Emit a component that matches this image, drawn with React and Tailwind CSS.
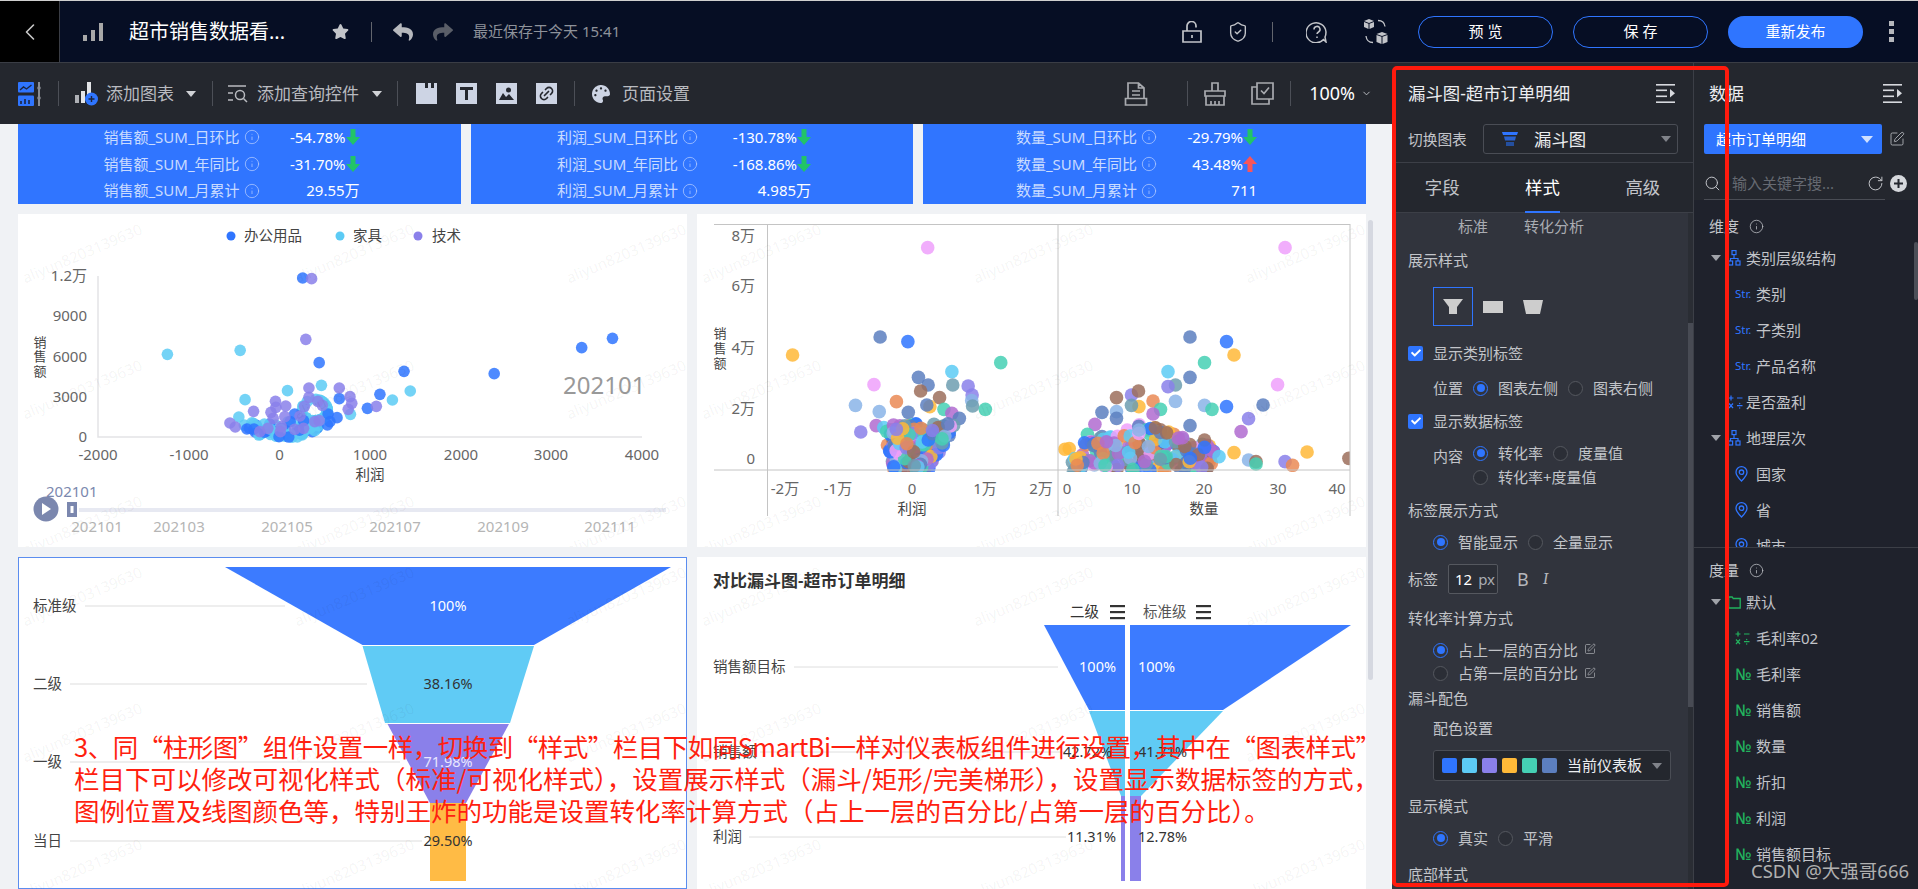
import { ChevronLeft, ChevronDown, ShieldCheck, Search, RotateCw, Info, SquarePen, Link2 } from 'lucide-react'
import { FaReply, FaShare, FaStar, FaPalette, FaCheck } from 'react-icons/fa'

const BLUE = '#2f75ff'
const SKY = '#5ccbf5'
const VIOLET = '#8a80ea'
const AMBER = '#ffb938'
const TEAL = '#45d0b4'
const SLATE = '#5c7fbf'
const BROWN = '#9c6f5c'
const ORANGE = '#ea8a55'
const PLUM = '#b06bd0'
const PINK = '#eea0fb'
const LBLUE = '#8ab4e8'
const STEEL = '#6d9db0'
const MIX = [BLUE, SKY, VIOLET, AMBER, TEAL, SLATE, BROWN, ORANGE, PLUM, PINK, LBLUE, STEEL]

// small seeded generator so the dense clusters stay the same on every render
function rng(seed) {
  let s = seed
  return () => {
    s = (s * 1664525 + 1013904223) % 4294967296
    return s / 4294967296
  }
}

const leftPts = (() => {
  const r = rng(7)
  const list = []
  for (let i = 0; i < 60; i++) {
    const t = r()
    const lo = 625 - 30 - t * 85
    const hi = 625 + 35 + t * 105
    list.push([lo + r() * (hi - lo), 684 - t * 50, i % 3 ? SKY : BLUE])
  }
  for (let i = 0; i < 26; i++) {
    const a = r() * 6.28
    list.push([705 + Math.cos(a) * 28, 600 + Math.sin(a) * 32, SKY])
  }
  const blue = [[678, 204], [715, 458], [905, 484], [1107, 491], [1303, 413], [1372, 385], [851, 553], [823, 595], [760, 566], [660, 612], [755, 623], [739, 635], [735, 612], [553, 657], [569, 657], [625, 680], [650, 635], [680, 632]]
  const sky = [[375, 433], [538, 421], [720, 526], [644, 542], [549, 569], [919, 543], [879, 570], [785, 613], [535, 621], [592, 642]]
  const violet = [[698, 206], [685, 388], [692, 534], [760, 534], [784, 560], [692, 562], [617, 574], [568, 604], [640, 588], [712, 574], [722, 586], [788, 580], [780, 598], [843, 589], [682, 589], [607, 607], [618, 592], [612, 625], [638, 620], [672, 618], [515, 639], [527, 651], [600, 655], [582, 665], [630, 650], [628, 665], [660, 658], [680, 655], [705, 635], [715, 632]]
  blue.forEach(p => list.push([...p, BLUE]))
  sky.forEach(p => list.push([...p, SKY]))
  violet.forEach(p => list.push([...p, VIOLET]))
  return list.map(([x, y, c]) => [x / 2.24, 210 + y / 3, c])
})()

const rightPts = (() => {
  const r = rng(21)
  const list = [
    [540, 113, PINK], [432, 381, SLATE], [495, 395, BLUE], [233, 435, AMBER], [706, 458, TEAL], [595, 485, SKY], [519, 502, SLATE], [541, 525, SLATE], [597, 525, STEEL], [632, 528, VIOLET], [418, 524, PINK], [524, 543, BROWN], [641, 555, VIOLET], [567, 563, BROWN], [469, 575, ORANGE], [376, 586, LBLUE], [640, 572, LBLUE], [642, 588, STEEL], [545, 590, AMBER], [538, 585, SLATE], [671, 598, TEAL], [577, 598, TEAL], [430, 605, LBLUE], [496, 607, SLATE], [595, 610, PLUM], [612, 625, SLATE], [423, 647, PLUM], [388, 666, VIOLET],
    [1352, 113, PINK], [1136, 381, SLATE], [1219, 395, BLUE], [1236, 435, AMBER], [1169, 458, TEAL], [1086, 485, SKY], [1136, 502, SLATE], [1103, 525, STEEL], [1086, 530, VIOLET], [1335, 524, PINK], [1003, 555, VIOLET], [1019, 543, BROWN], [969, 563, BROWN], [1052, 573, ORANGE], [1103, 574, LBLUE], [1302, 585, SLATE], [1169, 586, LBLUE], [1186, 598, TEAL], [1219, 590, BLUE], [1020, 590, AMBER], [1003, 586, STEEL], [1069, 598, TEAL], [1052, 612, PLUM], [969, 605, LBLUE], [936, 607, SLATE], [969, 625, SLATE], [1269, 626, VIOLET], [1252, 665, PLUM], [1136, 647, SLATE], [920, 643, PLUM], [936, 680, SLATE], [903, 673, TEAL], [1402, 726, AMBER], [1497, 745, BROWN], [1352, 755, VIOLET], [1369, 766, ORANGE], [1269, 750, LBLUE], [1286, 755, BROWN], [1286, 762, TEAL],
  ]
  // left panel cluster, a wedge that opens upward
  for (let i = 0; i < 240; i++) {
    const t = r()
    const y = 785 - t * 145
    const lo = 465 - t * 30
    const hi = 540 + t * 65
    list.push([lo + r() * (hi - lo), y, MIX[Math.floor(r() * 12)]])
  }
  // right panel cluster
  for (let i = 0; i < 180; i++) {
    const x = 850 + r() * 340
    const top = 640 + Math.abs(x - 1030) * 0.42
    list.push([x, top + r() * (785 - top), MIX[Math.floor(r() * 12)]])
  }
  list.push([1169, 690, BROWN], [1119, 683, PLUM], [1169, 712, BLUE], [1202, 740, SKY], [1236, 728, AMBER], [1020, 670, PINK], [1020, 660, LBLUE])
  return list.map(([x, y, c]) => [690 + x / 2.272, 210 + y / 3, c])
})()

function Watermark() {
  const cells = Array.from({ length: 9 })
  return (
    <div className="absolute inset-0 overflow-hidden pointer-events-none">
      <div className="absolute left-[-72px] top-[-29px] grid grid-cols-[272px_272px_272px] auto-rows-[136px]">
        {cells.map((_, i) => (
          <div key={i} className="flex items-center justify-center">
            <span className="-rotate-[23deg] text-[15px] text-black/[.055] whitespace-nowrap">aliyun8203139630</span>
          </div>
        ))}
      </div>
    </div>
  )
}

function Divider({ className }) {
  return <div className={`w-px h-[25px] bg-[#4c4f57] shrink-0 ${className}`} />
}

function Caret({ className }) {
  return <div className={`w-0 h-0 border-x-[5px] border-x-transparent border-t-[6px] shrink-0 ${className}`} />
}

function CollapseIcon() {
  return (
    <svg width="19" height="19" viewBox="0 0 19 19" fill="#d7d9de">
      <rect x="0" y="0" width="19" height="1.6" />
      <rect x="0" y="5.5" width="11" height="1.6" />
      <rect x="0" y="11.5" width="11" height="1.6" />
      <rect x="0" y="17.4" width="19" height="1.6" />
      <path d="M14 5l5 4.2-5 4.2z" />
    </svg>
  )
}

function KpiRow({ label, value, valueW, arrow, clip }) {
  return (
    <div className="flex items-center h-[27.5px]">
      {/* the last row's underscores are cut off by its line box in the picture */}
      <span className={`text-[15px] text-[#c9dbff] whitespace-nowrap ${clip ? 'h-[15px] leading-[15px] overflow-hidden' : ''}`}>{label}</span>
      <Info size={16} strokeWidth={1.1} className="ml-[4px] text-[#b5ccff] shrink-0" />
      <div className={`flex items-center justify-end text-[15px] text-white ${valueW}`}>
        <span>{value}</span>
        {arrow === 'down' && (
          <svg width="14" height="16" viewBox="0 0 14 16" fill="#22c468"><path d="M4.500 0h5v8H14l-7 8-7-8h4.500z" /></svg>
        )}
        {arrow === 'up' && (
          <svg width="14" height="16" viewBox="0 0 14 16" fill="#f8555a"><path d="M4.500 16h5V8H14L7 0 0 8h4.500z" /></svg>
        )}
      </div>
    </div>
  )
}

function KpiCard({ name, width, valueW, rows }) {
  return (
    <div className={`relative bg-[#3075ff] overflow-hidden flex flex-col items-center pr-4 ${width}`}>
      <KpiRow label={`${name}_SUM_日环比`} value={rows[0][0]} arrow={rows[0][1]} valueW={valueW} />
      <KpiRow label={`${name}_SUM_年同比`} value={rows[1][0]} arrow={rows[1][1]} valueW={valueW} />
      <KpiRow label={`${name}_SUM_月累计`} value={rows[2][0]} valueW={valueW} clip />
    </div>
  )
}

function ScatterLeft() {
  const ticks = [['-2000', 98], ['-1000', 189], ['0', 279.5], ['1000', 370], ['2000', 461], ['3000', 551], ['4000', 642]]
  const ys = [['1.2万', 276], ['9000', 316], ['6000', 356.5], ['3000', 397], ['0', 437]]
  const months = [['202101', 97], ['202103', 179], ['202105', 287], ['202107', 395], ['202109', 503], ['202111', 610]]
  return (
    <svg viewBox="18 214 669 333" className="block w-full h-full" fontSize="15" fill="#666">
      <circle cx="231" cy="236" r="4.5" fill={BLUE} />
      <text x="244" y="241" fontSize="14.5" fill="#444">办公用品</text>
      <circle cx="340" cy="236" r="4.5" fill={SKY} />
      <text x="353" y="241" fontSize="14.5" fill="#444">家具</text>
      <circle cx="418" cy="236" r="4.5" fill={VIOLET} />
      <text x="432" y="241" fontSize="14.5" fill="#444">技术</text>
      <path d="M98 276V437H642" fill="none" stroke="#e3e3e6" strokeWidth="1.5" />
      {ys.map(([t, y]) => <text key={t} x="87" y={y + 5} textAnchor="end">{t}</text>)}
      {ticks.map(([t, x]) => <text key={t} x={x} y="460" textAnchor="middle">{t}</text>)}
      <text x="370" y="480" textAnchor="middle" fontSize="14.5" fill="#444">利润</text>
      <text x="40" y="347" textAnchor="middle" fontSize="13" fill="#444">销</text>
      <text x="40" y="361" textAnchor="middle" fontSize="13" fill="#444">售</text>
      <text x="40" y="376" textAnchor="middle" fontSize="13" fill="#444">额</text>
      {leftPts.map(([x, y, c], i) => <circle key={i} cx={x} cy={y} r="5.8" fill={c} fillOpacity="0.85" />)}
      <text x="563" y="394" fontSize="24" fill="#999">202101</text>
      <text x="46" y="497" fontSize="15" fill="#7b88ae">202101</text>
      <circle cx="46" cy="509" r="12.5" fill="#7b87ae" />
      <path d="M42 503l9 6-9 6z" fill="#fff" />
      <rect x="79" y="508" width="587" height="4" fill="#e7e9f2" />
      <rect x="67" y="502" width="10" height="15" fill="#7b87ae" />
      <rect x="70.5" y="506" width="3" height="7" fill="#fff" />
      {months.map(([t, x]) => <text key={t} x={x} y="532" textAnchor="middle" fill="#b5b5b5">{t}</text>)}
    </svg>
  )
}

function ScatterRight() {
  const ys = [['8万', 236], ['6万', 286], ['4万', 348], ['2万', 409], ['0', 459]]
  const xs = [['-2万', 785], ['-1万', 838], ['0', 912], ['1万', 985], ['2万', 1041], ['0', 1067], ['10', 1132], ['20', 1204], ['30', 1278], ['40', 1337]]
  return (
    <svg viewBox="697 214 669 333" className="block w-full h-full" fontSize="15" fill="#666">
      <defs>
        <clipPath id="plot"><rect x="697" y="224" width="653" height="248" /></clipPath>
      </defs>
      <g clipPath="url(#plot)">
        {rightPts.map(([x, y, c], i) => <circle key={i} cx={x} cy={y} r="6.8" fill={c} fillOpacity="0.85" />)}
      </g>
      <path d="M714 224.500H1350M714 470H1350M767.500 224V516M1058 224V516M1350 224V516" fill="none" stroke="#c4c4c4" strokeWidth="1" />
      {ys.map(([t, y]) => <text key={t} x="755" y={y + 5} textAnchor="end">{t}</text>)}
      {xs.map(([t, x], i) => <text key={i} x={x} y="494" textAnchor="middle">{t}</text>)}
      <text x="912" y="514" textAnchor="middle" fontSize="14.5" fill="#444">利润</text>
      <text x="1204" y="514" textAnchor="middle" fontSize="14.5" fill="#444">数量</text>
      <text x="720" y="338" textAnchor="middle" fontSize="13" fill="#444">销</text>
      <text x="720" y="353" textAnchor="middle" fontSize="13" fill="#444">售</text>
      <text x="720" y="368" textAnchor="middle" fontSize="13" fill="#444">额</text>
    </svg>
  )
}

function FunnelLeft() {
  const labels = [['标准级', 606, 85, 285], ['二级', 684, 70, 367], ['一级', 762, 70, 400], ['当日', 841, 70, 422]]
  return (
    <svg viewBox="18 557 669 332" className="block w-full h-full" fontSize="14.5" fill="#444">
      <polygon points="225,567 671,567 534,645 362.500,645" fill="#3c7bff" />
      <polygon points="362.500,646 534,646 510,723 385,723" fill="#60cbf5" />
      <polygon points="387.500,724 509,724 466,803 430,803" fill={VIOLET} />
      <rect x="430" y="803" width="36" height="78" fill="#ffbb45" />
      {labels.map(([t, y, x1, x2]) => (
        <g key={t}>
          <text x="33" y={y + 5}>{t}</text>
          <line x1={x1} x2={x2} y1={y} y2={y} stroke="#dedede" strokeWidth="1.2" />
        </g>
      ))}
      <text x="448" y="611" textAnchor="middle" fill="#fff">100%</text>
      <text x="448" y="689" textAnchor="middle" fill="#333">38.16%</text>
      <text x="448" y="767" textAnchor="middle" fill="#e8e6ff">71.98%</text>
      <text x="448" y="846" textAnchor="middle" fill="#333">29.50%</text>
    </svg>
  )
}

function FunnelRight() {
  const menu = x => (
    <g fill="#333">
      <rect x={x} y="605" width="15" height="2.2" />
      <rect x={x} y="611" width="15" height="2.2" />
      <rect x={x} y="617" width="15" height="2.2" />
    </g>
  )
  return (
    <svg viewBox="697 557 669 332" className="block w-full h-full" fontSize="14.5" fill="#444">
      <text x="713" y="587" fontSize="17" fontWeight="600" fill="#333">对比漏斗图-超市订单明细</text>
      <text x="1070" y="617" fill="#333">二级</text>
      {menu(1110)}
      <text x="1143" y="617" fill="#555">标准级</text>
      {menu(1196)}
      <polygon points="1044,625 1125,625 1125,710 1089,710" fill="#3c7bff" />
      <polygon points="1130,625 1351,625 1223,710 1130,710" fill="#3c7bff" />
      <polygon points="1089,711 1125,711 1125,796 1121,796" fill="#60cbf5" />
      <polygon points="1130,711 1223,711 1141,796 1130,796" fill="#60cbf5" />
      <rect x="1121" y="796" width="4" height="85" fill={VIOLET} />
      <rect x="1130" y="796" width="11" height="85" fill={VIOLET} />
      <text x="713" y="672">销售额目标</text>
      <line x1="794" x2="1058" y1="667" y2="667" stroke="#dedede" strokeWidth="1" />
      <text x="713" y="757">销售额</text>
      <line x1="760" x2="1064" y1="752" y2="752" stroke="#dedede" strokeWidth="1" />
      <text x="713" y="842">利润</text>
      <line x1="749" x2="1066" y1="837" y2="837" stroke="#dedede" strokeWidth="1" />
      <text x="1116" y="672" textAnchor="end" fill="#fff">100%</text>
      <text x="1138" y="672" fill="#fff">100%</text>
      <text x="1112" y="757" textAnchor="end" fill="#333">42.72%</text>
      <text x="1138" y="757" fill="#333">41.71%</text>
      <text x="1116" y="842" textAnchor="end" fill="#333">11.31%</text>
      <text x="1138" y="842" fill="#333">12.78%</text>
    </svg>
  )
}

function Check({ children }) {
  return (
    <div className="flex items-center">
      <div className="w-[15px] h-[15px] rounded-[2px] bg-[#2f75ff] flex items-center justify-center">
        <FaCheck size={10} color="#fff" />
      </div>
      <span className="ml-[10px]">{children}</span>
    </div>
  )
}

function Radio({ on, children, className = '' }) {
  return (
    <div className={`flex items-center ${className}`}>
      {on ? (
        <div className="w-[15px] h-[15px] rounded-full border border-[#2f75ff] flex items-center justify-center">
          <div className="w-[8px] h-[8px] rounded-full bg-[#2f75ff]" />
        </div>
      ) : (
        <div className="w-[15px] h-[15px] rounded-full border border-[#55585f] bg-[#2b2e36]" />
      )}
      <span className="ml-[10px]">{children}</span>
    </div>
  )
}

function ConfigPanel() {
  return (
    <div className="w-[302px] shrink-0 flex flex-col bg-[#24272e] border-r border-[#3c3f47] text-[15px] text-[#c2c4c9]">
      <div className="h-[61px] flex items-center justify-between pl-[16px] pr-[18px]">
        <span className="text-[17.4px] text-[#eceef1]">漏斗图-超市订单明细</span>
        <CollapseIcon />
      </div>
      <div className="h-[39px] flex items-start pl-[16px] border-b border-[#3c3f47]">
        <span className="leading-[30px] w-[59px] text-[14.7px] whitespace-nowrap">切换图表</span>
        <div className="ml-[16px] w-[195px] h-[30px] border border-[#4a4d55] rounded-[3px] flex items-center pl-[18px] pr-[6px]">
          <svg width="16" height="14" viewBox="0 0 16 14">
            <path d="M0 0h16l-1 3H1z" fill="#2f75ff" />
            <path d="M2 4.500h12l-1 4H3z" fill="#2a62d0" />
            <path d="M4 10h8v4H4z" fill="#244f9f" />
          </svg>
          <span className="ml-[16px] text-[17.4px] text-[#eceef1] flex-1">漏斗图</span>
          <Caret className="border-t-[#80838a]" />
        </div>
      </div>
      <div className="h-[50px] flex border-b border-[#3c3f47] text-[17.4px]">
        <div className="flex-1 flex items-center justify-center">字段</div>
        <div className="flex-1 flex items-center justify-center relative text-white">
          样式
          <div className="absolute bottom-[-1px] left-[33px] w-[35px] h-[2px] bg-[#2f75ff]" />
        </div>
        <div className="flex-1 flex items-center justify-center">高级</div>
      </div>
      <div className="relative flex-1 bg-[#31343d] overflow-hidden pl-[16px]">
        <div className="absolute right-0 top-0 bottom-0 w-[5px] bg-[#2a2d34]">
          <div className="mt-[110px] h-[384px] bg-[#484b54]" />
        </div>
        <div className="h-[26px] flex items-center pl-[50px] text-[#a9acb2]">
          <span>标准</span>
          <span className="ml-[36px]">转化分析</span>
        </div>
        <div className="h-[42px] flex items-center">展示样式</div>
        <div className="mt-[6px] h-[39px] flex items-center pl-[25px]">
          <div className="w-[40px] h-[39px] border border-[#2f75ff] flex items-center justify-center">
            <svg width="20" height="15" viewBox="0 0 20 15" fill="#cdcdcd"><path d="M0 0h20l-6 8v7H6V8z" /></svg>
          </div>
          <div className="ml-[10px] w-[20px] h-[12px] bg-[#cdcdcd]" />
          <svg className="ml-[20px]" width="20" height="14" viewBox="0 0 20 14" fill="#cdcdcd"><path d="M0 0h20l-3 14H3z" /></svg>
        </div>
        <div className="mt-[14px] h-[26px] flex items-center"><Check>显示类别标签</Check></div>
        <div className="h-[44px] flex items-center pl-[25px]">
          <span className="w-[40px]">位置</span>
          <Radio on>图表左侧</Radio>
          <Radio className="ml-[10px]">图表右侧</Radio>
        </div>
        <div className="h-[22px] flex items-center"><Check>显示数据标签</Check></div>
        <div className="mt-[10px] h-[22px] flex items-center pl-[25px]">
          <span className="w-[40px] pt-[6px]">内容</span>
          <Radio on>转化率</Radio>
          <Radio className="ml-[10px]">度量值</Radio>
        </div>
        <div className="mt-[2px] h-[22px] flex items-center pl-[65px]">
          <Radio>转化率+度量值</Radio>
        </div>
        <div className="mt-[9px] h-[26px] flex items-center">标签展示方式</div>
        <div className="mt-[6px] h-[26px] flex items-center pl-[25px]">
          <Radio on>智能显示</Radio>
          <Radio className="ml-[10px]">全量显示</Radio>
        </div>
        <div className="mt-[9px] h-[30px] flex items-center">
          <span className="w-[40px]">标签</span>
          <div className="w-[50px] h-[30px] border border-[#55585f] rounded-[2px] flex items-center pl-[6px] bg-[#2b2e36]">
            <span className="text-white">12</span>
            <span className="ml-[6px] text-[#a9acb2]">px</span>
          </div>
          <span className="ml-[19px] text-[18px] text-[#b5b7bc]">B</span>
          <span className="ml-[14px] text-[17px] italic font-serif text-[#b5b7bc]">I</span>
        </div>
        <div className="mt-[11px] h-[26px] flex items-center">转化率计算方式</div>
        <div className="mt-[8px] h-[22px] flex items-center pl-[25px]">
          <Radio on>占上一层的百分比</Radio>
          <SquarePen size={12} strokeWidth={1.2} className="ml-[6px] -mt-[3px]" />
        </div>
        <div className="mt-[1px] h-[22px] flex items-center pl-[25px]">
          <Radio>占第一层的百分比</Radio>
          <SquarePen size={12} strokeWidth={1.2} className="ml-[6px] -mt-[1px]" />
        </div>
        <div className="mt-[3px] h-[22px] flex items-center">漏斗配色</div>
        <div className="mt-[8px] h-[22px] flex items-center pl-[25px]">配色设置</div>
        <div className="mt-[11px] ml-[25px] w-[238px] h-[31px] border border-[#4a4d55] rounded-[3px] bg-[#24272e] flex items-center pl-[8px] gap-[5px]">
          {['bg-[#2f75ff]', 'bg-[#5ccbf5]', 'bg-[#8a80ea]', 'bg-[#ffb938]', 'bg-[#45d0b4]', 'bg-[#5c7fbf]'].map(c => (
            <div key={c} className={`w-[15px] h-[15px] rounded-[2px] ${c}`} />
          ))}
          <span className="ml-[5px] text-[#eceef1] whitespace-nowrap">当前仪表板</span>
          <Caret className="ml-[5px] border-t-[#80838a]" />
        </div>
        <div className="mt-[14px] h-[22px] flex items-center">显示模式</div>
        <div className="mt-[10px] h-[22px] flex items-center pl-[25px]">
          <Radio on>真实</Radio>
          <Radio className="ml-[10px]">平滑</Radio>
        </div>
        <div className="mt-[14px] h-[22px] flex items-center">底部样式</div>
      </div>
    </div>
  )
}

function Hierarchy({ color = '#2f75ff' }) {
  return (
    <svg width="13" height="16" viewBox="0 0 13 16" fill="none" stroke={color} strokeWidth="1.2">
      <rect x="4" y="0.6" width="4" height="4" />
      <rect x="0.6" y="11" width="4" height="4" />
      <rect x="8" y="11" width="4" height="4" />
      <path d="M6 5v3.500M2.500 11V8.500h7.500V11" />
    </svg>
  )
}

function Calc({ color }) {
  return (
    <svg width="15" height="14" viewBox="0 0 15 14" stroke={color} strokeWidth="1.2" fill="none">
      <path d="M0.500 3h5M3 0.500v5M9 3h5.500M1 8.500l4 4.500M5 8.500l-4 4.500M9 10.700h5.500" />
      <circle cx="11.700" cy="8.500" r="0.7" fill={color} stroke="none" />
      <circle cx="11.700" cy="13" r="0.7" fill={color} stroke="none" />
    </svg>
  )
}

function Pin() {
  return (
    <svg width="13" height="16" viewBox="0 0 13 16" fill="none" stroke="#2f75ff" strokeWidth="1.3">
      <path d="M6.500 15C3 11.500 1 9 1 6.200a5.500 5.500 0 0 1 11 0C12 9 10 11.500 6.500 15z" />
      <circle cx="6.500" cy="6.200" r="2.200" />
    </svg>
  )
}

function GroupRow({ icon, caret = true, children }) {
  return (
    <div className="h-[36px] flex items-center pl-[17px]">
      <div className="w-[17px]">{caret && <Caret className="border-t-[#a0a3a9]" />}</div>
      <div className="w-[18px] flex items-center">{icon}</div>
      <span>{children}</span>
    </div>
  )
}

function LeafRow({ icon, children }) {
  return (
    <div className="h-[36px] flex items-center pl-[41px]">
      <div className="w-[21px] flex items-center">{icon}</div>
      <span>{children}</span>
    </div>
  )
}

const StrTag = <span className="text-[11.5px] text-[#2f75ff]">Str.</span>
const NumTag = <span className="text-[16px] leading-none font-medium text-[#22b35e]">№</span>

function DataPanel() {
  return (
    <div className="flex-1 flex flex-col bg-[#1f222c] text-[15px] text-[#c2c4c9]">
      <div className="bg-[#24272e]">
        <div className="h-[61px] flex items-center justify-between pl-[15px] pr-[16px]">
          <span className="text-[17.4px] text-[#eceef1]">数据</span>
          <CollapseIcon />
        </div>
        <div className="h-[30px] flex items-center pl-[10px]">
          <div className="w-[178px] h-[30px] bg-[#2f75ff] rounded-[2px] flex items-center justify-between pl-[12px] pr-[9px] text-white">
            超市订单明细
            <Caret className="border-x-[6px] border-t-[7px] border-t-[#cfe0ff]" />
          </div>
          <SquarePen size={16} strokeWidth={1.2} className="ml-[7px]" />
        </div>
        <div className="mt-[13px] h-[33px] flex items-center ml-[10px] w-[181px] border-b border-[#4a4d55] relative">
          <Search size={17} strokeWidth={1.4} />
          <span className="ml-[11px] text-[#666a72] whitespace-nowrap">输入关键字搜...</span>
          <RotateCw size={17} strokeWidth={1.4} className="absolute right-[1px] top-[8px]" />
          <svg className="absolute right-[-22px] top-[8px]" width="17" height="17" viewBox="0 0 17 17">
            <circle cx="8.500" cy="8.500" r="8.500" fill="#d6d8dc" />
            <path d="M8.500 4v9M4 8.500h9" stroke="#24272e" strokeWidth="2" />
          </svg>
        </div>
      </div>
      <div className="h-[348px] overflow-hidden relative border-b border-[#3c3f47]">
        <div className="absolute right-0 top-[42px] w-[4px] h-[58px] bg-[#4c4f58] rounded-full" />
        <div className="h-[40px] pt-[12px] flex items-center pl-[15px]">
          维度<Info size={15} strokeWidth={1.2} className="ml-[10px]" />
        </div>
        <GroupRow icon={<Hierarchy />}>类别层级结构</GroupRow>
        <LeafRow icon={StrTag}>类别</LeafRow>
        <LeafRow icon={StrTag}>子类别</LeafRow>
        <LeafRow icon={StrTag}>产品名称</LeafRow>
        <GroupRow caret={false} icon={<Calc color="#2f75ff" />}>是否盈利</GroupRow>
        <GroupRow icon={<Hierarchy />}>地理层次</GroupRow>
        <LeafRow icon={<Pin />}>国家</LeafRow>
        <LeafRow icon={<Pin />}>省</LeafRow>
        <LeafRow icon={<Pin />}>城市</LeafRow>
      </div>
      <div className="h-[36px] pt-[8px] flex items-center pl-[15px]">
        度量<Info size={15} strokeWidth={1.2} className="ml-[10px]" />
      </div>
      <GroupRow icon={
        <svg width="13" height="14" viewBox="0 0 13 14" fill="none" stroke="#22b35e" strokeWidth="1.3"><path d="M0.700 13V2h3.500l1 1.500h7V13z" /></svg>
      }>默认</GroupRow>
      <LeafRow icon={<Calc color="#22b35e" />}>毛利率02</LeafRow>
      <LeafRow icon={NumTag}>毛利率</LeafRow>
      <LeafRow icon={NumTag}>销售额</LeafRow>
      <LeafRow icon={NumTag}>数量</LeafRow>
      <LeafRow icon={NumTag}>折扣</LeafRow>
      <LeafRow icon={NumTag}>利润</LeafRow>
      <LeafRow icon={NumTag}>销售额目标</LeafRow>
    </div>
  )
}

function Toolbar() {
  return (
    <div className="h-[61px] shrink-0 flex items-center pl-[18px] pr-[20px] bg-[#24272e] text-[17px] text-[#b9bbc0] whitespace-nowrap">
      <svg width="24" height="24" viewBox="0 0 24 24" className="shrink-0">
        <rect x="0" y="0" width="16" height="10.5" rx="1" fill="#2f75ff" />
        <rect x="0" y="13.5" width="16" height="10.5" rx="1" fill="#2f75ff" />
        <path d="M2 8l3.500-3 3 2 5-4" stroke="#1b2540" strokeWidth="1.4" fill="none" />
        <path d="M3 22v-3M7 22v-5M11 22v-4" stroke="#1b2540" strokeWidth="1.6" />
        <path d="M21 0v24" stroke="#8a8d94" strokeWidth="2" />
        <circle cx="21" cy="6" r="1.8" fill="#8a8d94" /><circle cx="21" cy="16" r="1.8" fill="#8a8d94" />
      </svg>
      <Divider className="ml-[16px]" />
      <svg className="ml-[16px] shrink-0" width="23" height="24" viewBox="0 0 23 24">
        <rect x="0" y="13" width="4" height="8" fill="#aeb0b5" />
        <rect x="6" y="9" width="4" height="12" fill="#e3e4e7" />
        <rect x="12" y="0" width="4" height="15" fill="#e3e4e7" />
        <circle cx="16.5" cy="17" r="6.5" fill="#2f75ff" />
        <path d="M16.500 14v6M13.500 17h6" stroke="#1b2540" strokeWidth="1.4" />
      </svg>
      <span className="ml-[8px]">添加图表</span>
      <Caret className="ml-[12px] border-t-[#d0d2d6]" />
      <Divider className="ml-[16px]" />
      <svg className="ml-[15px] shrink-0" width="20" height="20" viewBox="0 0 20 20" fill="none" stroke="#b9bbc0" strokeWidth="1.5">
        <path d="M0 2h18M0 9h5M0 16h5" />
        <circle cx="12" cy="11" r="4.5" /><path d="M15.500 14.500L19 18" />
      </svg>
      <span className="ml-[9px]">添加查询控件</span>
      <Caret className="ml-[13px] border-t-[#d0d2d6]" />
      <Divider className="ml-[15px]" />
      <svg className="ml-[18px] shrink-0" width="21" height="21" viewBox="0 0 21 21" fill="#cdd4e4"><path d="M0 0h9v5h3V0h3v5h3V0h3v21H0z" /></svg>
      <div className="ml-[19px] w-[21px] h-[21px] bg-[#cdd4e4] flex items-center justify-center shrink-0">
        <svg width="13" height="13" viewBox="0 0 13 13" fill="#24272e"><path d="M0 0h13v3H8v10H5V3H0z" /></svg>
      </div>
      <div className="ml-[19px] w-[21px] h-[21px] bg-[#cdd4e4] flex items-center justify-center shrink-0">
        <svg width="15" height="13" viewBox="0 0 15 13" fill="#24272e"><circle cx="9.5" cy="3" r="2.5" /><path d="M0 13l4-7 3 4 3-3 5 6z" /></svg>
      </div>
      <div className="ml-[19px] w-[21px] h-[21px] bg-[#cdd4e4] flex items-center justify-center shrink-0">
        <Link2 size={17} color="#24272e" strokeWidth={2.4} className="-rotate-45" />
      </div>
      <Divider className="ml-[17px]" />
      <FaPalette size={18} color="#cdd4e4" className="ml-[17px] shrink-0" />
      <span className="ml-[12px]">页面设置</span>
      <div className="ml-auto flex items-center">
        <svg width="24" height="24" viewBox="0 0 24 24" fill="none" stroke="#a8aaaf" strokeWidth="1.7">
          <path d="M4 16.500V1h10.500L20 6v10.500M14.500 1v5H20M1.500 16.500h21V23h-21zM8 9h8M8 13h8" />
        </svg>
        <Divider className="ml-[39px]" />
        <svg className="ml-[16px]" width="22" height="24" viewBox="0 0 22 24" fill="none" stroke="#a8aaaf" strokeWidth="1.7">
          <path d="M8 9V1h6v8M1 9h20v5H1zM2 14v9h18v-9M7 23v-4M11 23v-4M15 23v-4" />
        </svg>
        <svg className="ml-[25px]" width="23" height="23" viewBox="0 0 23 23" fill="none" stroke="#a8aaaf" strokeWidth="1.7">
          <path d="M6 1h16v16H6zM6 5H1v17h17v-5M10 8.500l3 3 5-6" />
        </svg>
        <Divider className="ml-[16px]" />
        <span className="ml-[18px] text-[18px] text-white">100%</span>
        <ChevronDown size={11} className="ml-[6px] text-[#c2c4c9]" />
      </div>
    </div>
  )
}

function TopBar() {
  return (
    <div className="h-[62px] shrink-0 flex items-center border-t border-[#cfcfcf] bg-[#060e24] text-[#a8acb5]">
      <div className="w-[60px] h-full bg-black border-r border-[#3a3d45] flex items-center justify-center shrink-0">
        <ChevronLeft size={28} strokeWidth={1.4} className="text-[#c8c8c8]" />
      </div>
      <svg className="ml-[23px] shrink-0" width="21" height="18" viewBox="0 0 21 18" fill="#a8a8a8">
        <rect x="0" y="12" width="4" height="6" /><rect x="8" y="7" width="4" height="11" /><rect x="16" y="0" width="4" height="18" />
      </svg>
      <span className="ml-[25px] w-[203px] text-[20px] text-white whitespace-nowrap">超市销售数据看...</span>
      <FaStar size={17} className="text-[#c2c4c9] shrink-0" />
      <div className="ml-[22px] w-px h-[20px] bg-[#62656d]" />
      <FaReply size={20} className="ml-[21px] text-[#b6b8bd]" />
      <FaShare size={20} className="ml-[20px] text-[#5a5e68]" />
      <span className="ml-[20px] text-[15px] text-[#8e929a] whitespace-nowrap">最近保存于今天 15:41</span>
      <div className="ml-auto flex items-center pr-[24px]">
        <svg width="20" height="22" viewBox="0 0 20 22" fill="none" stroke="#c2c4c9" strokeWidth="1.7">
          <path d="M1 10h18v11H1zM5 10V5a4.500 4.500 0 0 1 9 0v1.500M10 14v3" />
        </svg>
        <ShieldCheck size={22} strokeWidth={1.5} className="ml-[25px] text-[#c2c4c9]" />
        <div className="ml-[23px] w-px h-[20px] bg-[#62656d]" />
        <svg className="ml-[33px]" width="22" height="22" viewBox="0 0 22 22" fill="none" stroke="#c2c4c9" strokeWidth="1.5">
          <path d="M20 21l-2.500-2.500A10 10 0 1 1 20 11c0 2-.3 3.500-1 5z" />
          <path d="M8 8.500a3 3 0 1 1 4.500 2.500c-1 .6-1.500 1-1.500 2M11 15.500v1.500" />
        </svg>
        <svg className="ml-[35px]" width="25" height="25" viewBox="0 0 25 25" fill="#c2c4c9">
          <path d="M6 0l5 2-5 2-5-2zM1 3l4.500 1.800V10L1 8zM11 3L6.500 4.800V10L11 8z" />
          <path d="M19 13l5.500 2-5.500 2-5.500-2zM13.500 16l5 1.800V25l-5-2zM24.500 16l-5 1.800V25l5-2z" />
          <path d="M15 1.500c4 0 6.500 2 7 6M10 23.500c-4 0-6.500-2-7-6.500" fill="none" stroke="#c2c4c9" strokeWidth="1.3" />
        </svg>
        <button className="ml-[30px] w-[135px] h-[32px] rounded-full border border-[#2f75ff] text-[15px] text-white">预 览</button>
        <button className="ml-[20px] w-[135px] h-[32px] rounded-full border border-[#2f75ff] text-[15px] text-white">保 存</button>
        <button className="ml-[20px] w-[135px] h-[32px] rounded-full bg-[#2f75ff] text-[15px] text-white">重新发布</button>
        <div className="ml-[26px] w-[5px] flex flex-col gap-[3px]">
          <div className="h-[5px] bg-[#b5b7bc]" /><div className="h-[5px] bg-[#b5b7bc]" /><div className="h-[5px] bg-[#b5b7bc]" />
        </div>
      </div>
    </div>
  )
}

export default function App() {
  return (
    <div className="relative w-[1918px] h-[889px] overflow-hidden flex flex-col font-['Noto_Sans','Noto_Sans_CJK_SC',sans-serif]">
      <TopBar />
      <div className="flex-1 flex min-h-0 border-t border-[#3a3d45]">
        <div className="w-[1392px] shrink-0 flex flex-col">
          <Toolbar />
          <div className="relative flex-1 bg-[#f0f2f5] pl-[18px] overflow-hidden">
            <div className="absolute left-[1368px] top-[96px] w-[5px] h-[460px] bg-[#d5d8e0] rounded-full" />
            <div className="flex gap-[10px] h-[80px]">
              <KpiCard name="销售额" width="w-[443px]" valueW="w-[100px]" rows={[['-54.78%', 'down'], ['-31.70%', 'down'], ['29.55万']]} />
              <KpiCard name="利润" width="w-[442px]" valueW="w-[113px]" rows={[['-130.78%', 'down'], ['-168.86%', 'down'], ['4.985万']]} />
              <KpiCard name="数量" width="w-[443px]" valueW="w-[100px]" rows={[['-29.79%', 'down'], ['43.48%', 'up'], ['711']]} />
            </div>
            <div className="mt-[10px] flex gap-[10px] h-[333px]">
              <div className="relative w-[669px] bg-white"><ScatterLeft /><Watermark /></div>
              <div className="relative w-[669px] bg-white"><ScatterRight /><Watermark /></div>
            </div>
            <div className="mt-[10px] flex gap-[10px] h-[332px]">
              <div className="relative w-[669px] bg-white ring-1 ring-inset ring-[#5b8def]"><FunnelLeft /><Watermark /></div>
              <div className="relative w-[669px] bg-white"><FunnelRight /><Watermark /></div>
            </div>
          </div>
        </div>
        <ConfigPanel />
        <DataPanel />
      </div>

      {/* annotation drawn on top of the screenshot */}
      <div className="absolute left-[74px] top-[730px] font-['Noto_Sans_CJK_SC',sans-serif] text-[25.5px] leading-[32px] text-[#ff1f10] whitespace-nowrap">
        <div className="tracking-[-0.5px]">3、同“柱形图”组件设置一样，切换到“样式”栏目下如同SmartBi一样对仪表板组件进行设置，其中在“图表样式”</div>
        <div>栏目下可以修改可视化样式（标准/可视化样式），设置展示样式（漏斗/矩形/完美梯形），设置显示数据标签的方式，</div>
        <div>图例位置及线图颜色等，特别王炸的功能是设置转化率计算方式（占上一层的百分比/占第一层的百分比）。</div>
      </div>
      <div className="absolute left-[1392px] top-[66px] w-[337px] h-[821px] border-[4px] border-[#ff1a0d] rounded-[5px]" />
      <div className="absolute left-[1751px] top-[857px] text-[18.5px] text-[#b0b0b0] whitespace-nowrap">CSDN @大强哥666</div>
    </div>
  )
}
